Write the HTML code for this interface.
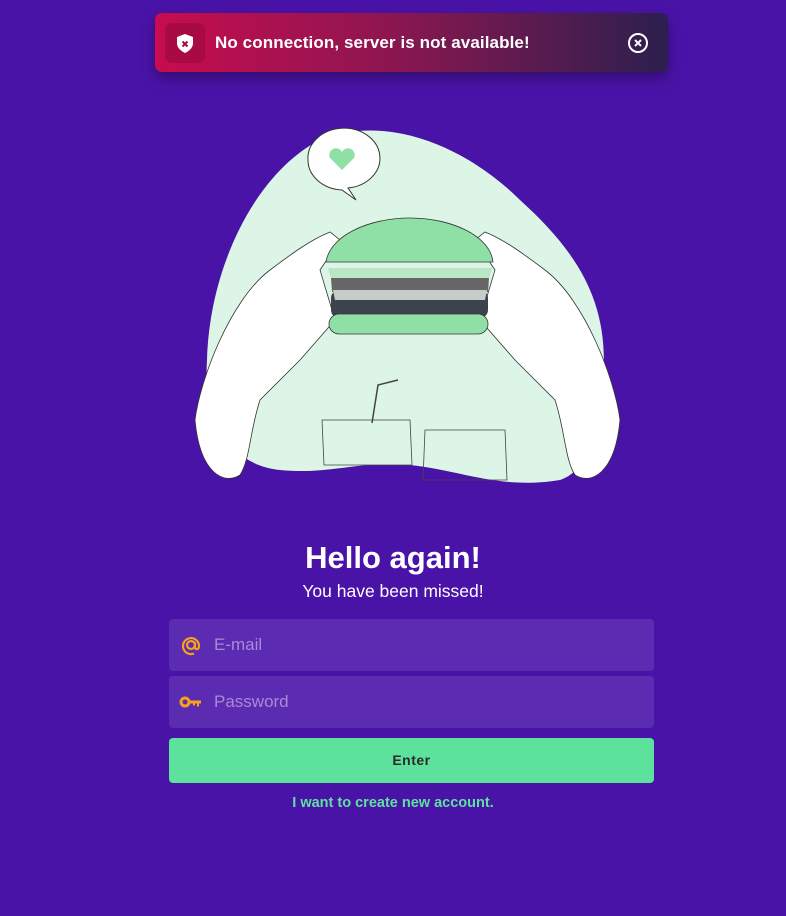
<!DOCTYPE html>
<html><head><meta charset="utf-8"><style>
body{margin:0;width:786px;height:916px;background:#4a13a8;font-family:"Liberation Sans",sans-serif;position:relative;overflow:hidden}
.toast{position:absolute;left:155px;top:13px;width:513px;height:59px;border-radius:7px;background:linear-gradient(90deg,#c80c4f,#8e1650 45%,#2c1f4e);box-shadow:0 6px 14px rgba(0,0,0,.35)}
.toast .ic{position:absolute;left:10px;top:10px;width:40px;height:40px;border-radius:7px;background:#a80a42}
.toast .t{position:absolute;left:60px;top:20px;color:#fff;font-weight:bold;font-size:17px;letter-spacing:0.1px}
.inp{position:absolute;left:169px;width:485px;height:52px;background:#5b2bb2;border-radius:4px}
.inp span{position:absolute;left:45px;top:16px;color:#a98ad6;font-size:17px}
</style></head><body>
<div class="toast"><div class="ic"><svg width="40" height="40"><path d="M20 11l8 3v6c0 5-4 8-8 10-4-2-8-5-8-10v-6z" fill="#fff"/><path d="M17.5 18.5l5 5M22.5 18.5l-5 5" stroke="#a80a42" stroke-width="2"/></svg></div>
<div class="t">No connection, server is not available!</div>
<svg style="position:absolute;left:472px;top:19px" width="22" height="22"><circle cx="11" cy="11" r="9" fill="none" stroke="#fff" stroke-width="2"/><path d="M8 8l6 6M14 8l-6 6" stroke="#fff" stroke-width="2"/></svg></div>

<svg style="position:absolute;left:0;top:0" width="786" height="500">
<path d="M207 360 C210 260 260 170 320 140 C390 112 470 150 520 200 C575 250 610 300 603 380 C598 430 590 470 560 480 C500 490 460 470 410 465 C360 460 330 475 280 470 C230 465 203 420 207 360Z" fill="#dcf5e6"/>
<path d="M195 420 C200 380 230 300 270 270 C290 255 310 240 330 232 L340 240 L320 270 L335 320 L300 360 L260 400 C250 430 250 460 240 475 C225 485 200 475 195 420Z" fill="#fff" stroke="#333" stroke-width="0.8"/>
<path d="M620 420 C615 380 585 300 545 270 C525 255 505 240 485 232 L475 240 L495 270 L480 320 L515 360 L555 400 C565 430 565 460 575 475 C590 485 615 475 620 420Z" fill="#fff" stroke="#333" stroke-width="0.8"/>
<path d="M308 160 a36 30 0 1 1 40 28 l8 12 l-14 -10 a36 30 0 0 1 -34 -30z" fill="#fff" stroke="#333"/>
<path d="M342 170 l-12 -12 a6 6 0 0 1 12 -6 a6 6 0 0 1 12 6z" fill="#8fe0a6"/>
<path d="M326 262 C330 235 370 218 410 218 C450 218 490 235 493 262 Z" fill="#8fe0a6" stroke="#333" stroke-width="0.8"/>
<path d="M328 268 L492 268 L488 282 L332 282Z" fill="#b9e6c4"/>
<path d="M331 278 L489 278 L488 292 L332 292Z" fill="#666"/>
<rect x="331" y="290" width="157" height="28" rx="8" fill="#3d434c"/>
<path d="M333 290 L487 290 L485 300 L335 300Z" fill="#c8ccc8"/>
<rect x="329" y="314" width="159" height="20" rx="10" fill="#8fe0a6" stroke="#333" stroke-width="0.8"/>
<path d="M322 420 L410 420 L412 465 L324 465Z" fill="#dcf5e6" stroke="#444" stroke-width="0.8"/>
<path d="M372 423 L378 385 L398 380" stroke="#444" fill="none" stroke-width="1.5"/>
<path d="M425 430 L505 430 L507 480 L423 480Z" fill="none" stroke="#444" stroke-width="0.8"/>
</svg>

<div style="position:absolute;left:0;width:786px;top:540px;text-align:center;color:#fff;font-weight:bold;font-size:31px">Hello again!</div>
<div style="position:absolute;left:0;width:786px;top:581px;text-align:center;color:#fff;font-size:17.5px">You have been missed!</div>

<div class="inp" style="top:619px"><svg style="position:absolute;left:11px;top:15px" width="22" height="22"><circle cx="11" cy="11" r="4" fill="none" stroke="#f7a21b" stroke-width="2.2"/><path d="M15 8v5c0 3 4 3 4-1a8 8 0 1 0 -5 7.5" fill="none" stroke="#f7a21b" stroke-width="2.2"/></svg><span>E-mail</span></div>
<div class="inp" style="top:676px"><svg style="position:absolute;left:10px;top:19px" width="24" height="14"><circle cx="6" cy="7" r="4" fill="none" stroke="#f7a21b" stroke-width="3"/><path d="M10 5.5h12v3h-2v3h-2v-3h-2v2h-2v-2h-4z" fill="#f7a21b"/></svg><span>Password</span></div>
<div style="position:absolute;left:169px;top:738px;width:485px;height:45px;background:#5de29e;border-radius:4px;text-align:center;line-height:45px;font-weight:bold;font-size:14px;color:#2a2a2a;letter-spacing:0.5px">Enter</div>
<div style="position:absolute;left:0;width:786px;top:795px;text-align:center;color:#5de29e;font-weight:bold;font-size:14.5px">I want to create new account.</div>
</body></html>
